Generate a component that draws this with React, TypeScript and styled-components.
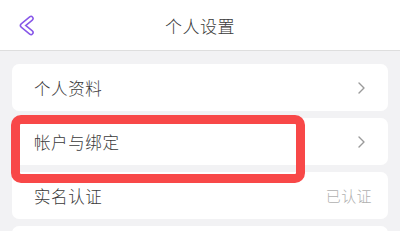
import styled, { createGlobalStyle } from "styled-components";

const GlobalStyle = createGlobalStyle`
  html, body {
    margin: 0;
    padding: 0;
    background: #f2f2f4;
  }
  body {
    font-family: "Noto Sans CJK SC", "Noto Sans", sans-serif;
  }
`;

const Page = styled.div`
  width: 400px;
  height: 231px;
  overflow: hidden;
  background: #f2f2f4;
`;

const Header = styled.header`
  height: 51px;
  display: grid;
  grid-template-columns: 60px 1fr 60px;
  align-items: center;
  background: #ffffff;
  border-bottom: 1px solid #dedede;
  box-sizing: border-box;

  .title {
    text-align: center;
    font-size: 17px;
    font-weight: 300;
    color: #3a3a3a;
    letter-spacing: 0.5px;
  }
`;

const BackButton = styled.button`
  border: none;
  background: none;
  padding: 0 0 0 18px;
  height: 100%;
  display: flex;
  align-items: center;
  cursor: pointer;
`;

const List = styled.ul`
  list-style: none;
  margin: 0;
  padding: 13px 12px 0 12px;
  display: flex;
  flex-direction: column;
  gap: 7px;
`;

const Row = styled.li<{ $highlight?: boolean }>`
  position: relative;
  z-index: ${(props) => (props.$highlight ? 2 : 1)};
  height: 47px;
  display: flex;
  align-items: center;
  justify-content: space-between;
  padding: 0 22px 0 22px;
  background: #ffffff;
  border-radius: 7px;
  box-sizing: border-box;

  .label {
    font-size: 16.5px;
    font-weight: 300;
    color: #3a3a3a;
    letter-spacing: 0.6px;
  }

  .value {
    font-size: 15px;
    font-weight: 300;
    color: #b0b0b0;
    margin-right: -6px;
    letter-spacing: 0.4px;
  }

  ${(props) =>
    props.$highlight &&
    `
    &::after {
      content: "";
      position: absolute;
      left: -1px;
      top: -3px;
      width: 294px;
      height: 68px;
      box-sizing: border-box;
      border: 9.5px solid #f84848;
      border-radius: 10px;
    }
  `}
`;

const Chevron = () => (
  <svg width="9" height="12" viewBox="0 0 9 12">
    <path
      d="M2 1 L7 6 L2 11"
      fill="none"
      stroke="#9a9a9a"
      strokeWidth="1.4"
      strokeLinecap="round"
      strokeLinejoin="round"
    />
  </svg>
);

const BackIcon = () => (
  <svg width="17" height="21" viewBox="0 0 17 21">
    <polyline
      points="13,3.5 4.5,10.5 13,17.5"
      fill="none"
      stroke="#8757e8"
      strokeWidth="5.6"
      strokeLinecap="round"
      strokeLinejoin="round"
    />
    <polyline
      points="13,3.5 4.5,10.5 13,17.5"
      fill="none"
      stroke="#ffffff"
      strokeWidth="2.6"
      strokeLinecap="round"
      strokeLinejoin="round"
    />
  </svg>
);

const items = [
  { label: "个人资料" },
  { label: "帐户与绑定", highlight: true },
  { label: "实名认证", value: "已认证" },
  { label: "" },
];

export default function App() {
  return (
    <Page>
      <GlobalStyle />
      <Header>
        <BackButton>
          <BackIcon />
        </BackButton>
        <span className="title">个人设置</span>
        <span />
      </Header>
      <List>
        {items.map((item, i) => (
          <Row key={i} $highlight={item.highlight}>
            <span className="label">{item.label}</span>
            {item.value ? (
              <span className="value">{item.value}</span>
            ) : (
              item.label && <Chevron />
            )}
          </Row>
        ))}
      </List>
    </Page>
  );
}
